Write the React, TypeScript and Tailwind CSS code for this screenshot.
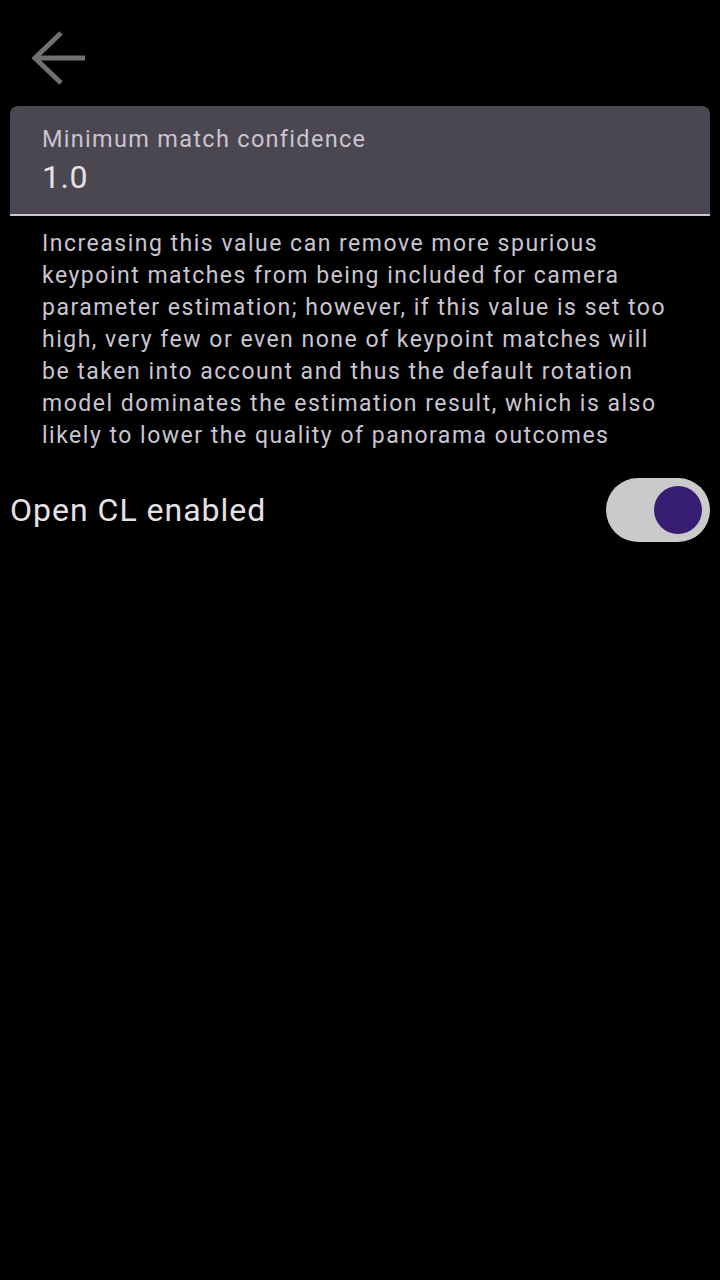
export default function App() {
  return (
    <div className="min-h-[1280px] w-[720px] bg-black" style={{ fontFamily: 'Roboto, "Noto Sans", sans-serif' }}>
      <div className="h-[106px] pl-[18px] pt-[18px]">
        <svg width="80" height="80" viewBox="0 0 80 80" fill="none" stroke="#707070" strokeWidth="5">
          <path d="M17 40 H67" />
          <path d="M43 15 L17 40 L43 65" />
        </svg>
      </div>

      <div className="mx-[10px] h-[110px] rounded-t-[8px] border-b-2 border-[#cbc6d2] bg-[#4a4751] px-[32px] pt-[19px]">
        <div className="text-[23.5px] leading-[28px] tracking-[1.3px] text-[#cac4d0]">Minimum match confidence</div>
        <div className="mt-[4px] text-[32px] leading-[40px] tracking-[0.5px] text-[#e6e1e5]">1.0</div>
      </div>

      <p className="pl-[42px] pr-[48px] pt-[12px] text-[23px] leading-[32px] tracking-[1.5px] text-[#cac4d0]">
        Increasing this value can remove more spurious keypoint matches from being included for camera parameter estimation; however, if this value is set too high, very few or even none of keypoint matches will be taken into account and thus the default rotation model dominates the estimation result, which is also likely to lower the quality of panorama outcomes
      </p>

      <div className="mt-[26px] flex items-center justify-between px-[10px]">
        <span className="text-[32px] leading-[40px] tracking-[1px] text-[#e6e1e5]">Open CL enabled</span>
        <div className="flex h-[64px] w-[104px] items-center justify-end rounded-full bg-[#cacaca] pr-[8px]">
          <div className="h-[48px] w-[48px] rounded-full bg-[#381e72]" />
        </div>
      </div>
    </div>
  )
}
